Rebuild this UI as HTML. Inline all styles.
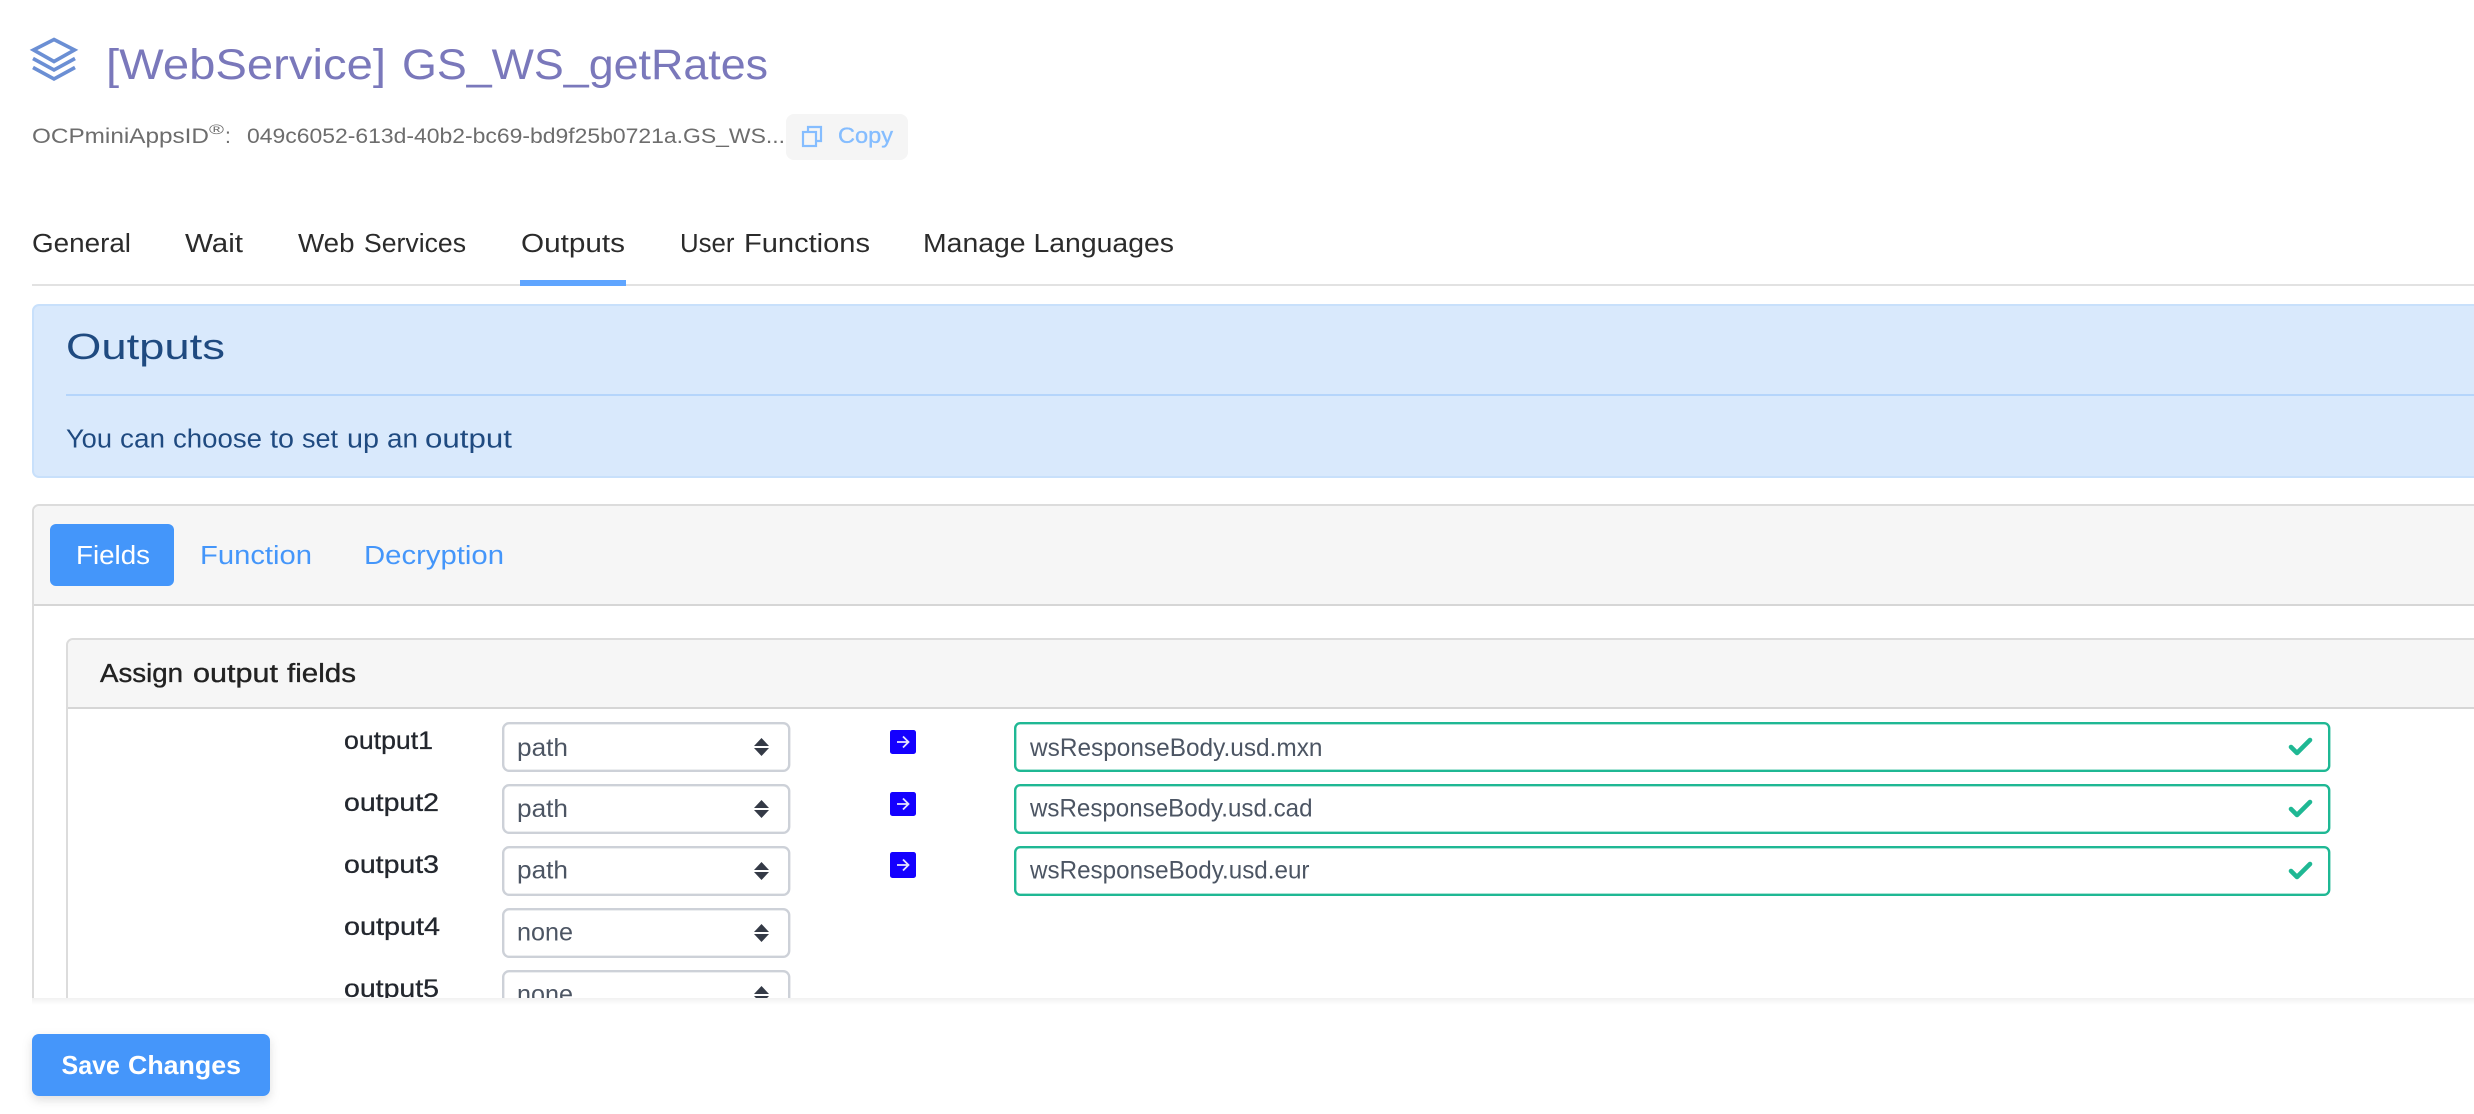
<!DOCTYPE html>
<html lang="en">
<head>
<meta charset="utf-8">
<title>[WebService] GS_WS_getRates</title>
<style>
html,body{margin:0;padding:0;background:#fff;width:2474px;height:1114px;overflow:hidden}
svg{display:block}
text{font-family:"Liberation Sans",Arial,sans-serif}
</style>
</head>
<body>
<svg xmlns="http://www.w3.org/2000/svg" width="2474" height="1114" viewBox="0 0 2474 1114">
<defs>
<linearGradient id="fs" x1="0" y1="0" x2="0" y2="1"><stop offset="0" stop-color="#f1f1f1"/><stop offset="1" stop-color="#ffffff"/></linearGradient>
<filter id="bs" x="-10%" y="-20%" width="120%" height="150%"><feDropShadow dx="0" dy="4" stdDeviation="5" flood-color="#000" flood-opacity=".13"/></filter>
</defs>
<rect width="2474" height="1114" fill="#fff"/>

<!-- header -->
<g fill="none" stroke="#6b8fd4" stroke-width="3.6" stroke-linejoin="miter">
<path d="M54 39.5L74.5 50L54 61.5L33.5 50Z"/>
<path d="M33 58.500L54 70L75 58.500"/>
<path d="M33 67.500L54 79L75 67.500"/>
</g>
<text x="106" y="79" font-size="43" fill="#7a78bb" textLength="280" lengthAdjust="spacingAndGlyphs">[WebService]</text>
<text x="402" y="79" font-size="43" fill="#7a78bb" textLength="366" lengthAdjust="spacingAndGlyphs">GS_WS_getRates</text>

<g fill="#6d6d6d">
<text x="32" y="143" font-size="21" textLength="177" lengthAdjust="spacingAndGlyphs">OCPminiAppsID</text>
<text x="209" y="134" font-size="14" textLength="15" lengthAdjust="spacingAndGlyphs">®</text>
<text x="225" y="143" font-size="21">:</text>
<text x="247" y="143" font-size="21" textLength="538" lengthAdjust="spacingAndGlyphs">049c6052-613d-40b2-bc69-bd9f25b0721a.GS_WS...</text>
</g>
<rect x="786" y="114" width="122" height="46" rx="8" fill="#f5f5f5"/>
<g fill="none" stroke="#85bdff" stroke-width="2.2">
<rect x="803" y="132" width="13" height="14"/>
<path d="M808 131V127H821V141H817"/>
</g>
<text x="838" y="143" font-size="22" fill="#85bdff" stroke="#85bdff" stroke-width=".35" textLength="55" lengthAdjust="spacingAndGlyphs">Copy</text>

<!-- nav tabs -->
<g font-size="25.5" fill="#2b2b2b">
<text x="32" y="252" textLength="99" lengthAdjust="spacingAndGlyphs">General</text>
<text x="185" y="252" textLength="58" lengthAdjust="spacingAndGlyphs">Wait</text>
<text x="298" y="252" textLength="56.500" lengthAdjust="spacingAndGlyphs">Web</text>
<text x="364" y="252" textLength="102" lengthAdjust="spacingAndGlyphs">Services</text>
<text x="521" y="252" textLength="104" lengthAdjust="spacingAndGlyphs">Outputs</text>
<text x="680" y="252" textLength="54.500" lengthAdjust="spacingAndGlyphs">User</text>
<text x="744" y="252" textLength="126" lengthAdjust="spacingAndGlyphs">Functions</text>
<text x="923" y="252" textLength="251" lengthAdjust="spacingAndGlyphs">Manage Languages</text>
</g>
<rect x="32" y="284" width="2442" height="2" fill="#e2e2e2"/>
<rect x="520" y="280" width="106" height="6" fill="#5fa5ff"/>

<!-- alert -->
<rect x="33" y="305" width="2460" height="172" rx="6" fill="#d9e9fc" stroke="#c8e0fb" stroke-width="2"/>
<text x="66" y="359" font-size="36" fill="#1f4a80" textLength="159" lengthAdjust="spacingAndGlyphs">Outputs</text>
<rect x="66" y="394" width="2408" height="2" fill="#b5d5fb"/>
<g font-size="25.5" fill="#1f4a80">
<text x="66" y="447.500" textLength="46" lengthAdjust="spacingAndGlyphs">You</text>
<text x="120" y="447.500" textLength="45" lengthAdjust="spacingAndGlyphs">can</text>
<text x="173" y="447.500" textLength="89" lengthAdjust="spacingAndGlyphs">choose</text>
<text x="270" y="447.500" textLength="24" lengthAdjust="spacingAndGlyphs">to</text>
<text x="302" y="447.500" textLength="36" lengthAdjust="spacingAndGlyphs">set</text>
<text x="347" y="447.500" textLength="32" lengthAdjust="spacingAndGlyphs">up</text>
<text x="387" y="447.500" textLength="31" lengthAdjust="spacingAndGlyphs">an</text>
<text x="425" y="447.500" textLength="87" lengthAdjust="spacingAndGlyphs">output</text>
</g>

<!-- outer card -->
<rect x="33" y="505" width="2460" height="560" rx="6" fill="#fff" stroke="#dcdcdc" stroke-width="2"/>
<path d="M34 605V512a6 6 0 0 1 6-6H2474V605Z" fill="#f6f6f6"/>
<rect x="34" y="604" width="2440" height="2" fill="#d6d6d6"/>
<rect x="50" y="524" width="124" height="62" rx="6" fill="#4496fa"/>
<text x="76" y="564" font-size="25.5" fill="#fff" textLength="74" lengthAdjust="spacingAndGlyphs">Fields</text>
<text x="200" y="564" font-size="25.5" fill="#4496fa" textLength="112" lengthAdjust="spacingAndGlyphs">Function</text>
<text x="364" y="564" font-size="25.5" fill="#4496fa" textLength="140" lengthAdjust="spacingAndGlyphs">Decryption</text>

<!-- inner card -->
<rect x="67" y="639" width="2440" height="440" rx="6" fill="#fff" stroke="#dcdcdc" stroke-width="2"/>
<path d="M68 708V646a6 6 0 0 1 6-6H2474V708Z" fill="#f6f6f6"/>
<rect x="68" y="707" width="2406" height="2" fill="#d6d6d6"/>
<g font-size="25.5" fill="#222" stroke="#222" stroke-width=".35">
<text x="100" y="682" textLength="83" lengthAdjust="spacingAndGlyphs">Assign</text>
<text x="193" y="682" textLength="85" lengthAdjust="spacingAndGlyphs">output</text>
<text x="287" y="682" textLength="69" lengthAdjust="spacingAndGlyphs">fields</text>
</g>

<!-- rows -->
<g font-size="25" fill="#23272e" stroke="#23272e" stroke-width=".3">
<text x="344" y="749" textLength="89" lengthAdjust="spacingAndGlyphs">output1</text>
<text x="344" y="811" textLength="95" lengthAdjust="spacingAndGlyphs">output2</text>
<text x="344" y="873" textLength="95" lengthAdjust="spacingAndGlyphs">output3</text>
<text x="344" y="935" textLength="96" lengthAdjust="spacingAndGlyphs">output4</text>
<text x="344" y="997" textLength="95" lengthAdjust="spacingAndGlyphs">output5</text>
</g>

<g fill="#fff" stroke="#cdd1d8" stroke-width="2.4">
<rect x="503.2" y="723.2" width="286" height="47.6" rx="6"/>
<rect x="503.2" y="785.2" width="286" height="47.6" rx="6"/>
<rect x="503.2" y="847.2" width="286" height="47.6" rx="6"/>
<rect x="503.2" y="909.2" width="286" height="47.6" rx="6"/>
<rect x="503.2" y="971.2" width="286" height="47.6" rx="6"/>
</g>
<g font-size="25" fill="#4c5563">
<text x="517" y="756" textLength="51" lengthAdjust="spacingAndGlyphs">path</text>
<text x="517" y="817" textLength="51" lengthAdjust="spacingAndGlyphs">path</text>
<text x="517" y="878.500" textLength="51" lengthAdjust="spacingAndGlyphs">path</text>
<text x="517" y="940.500" textLength="56" lengthAdjust="spacingAndGlyphs">none</text>
<text x="517" y="1002.500" textLength="56" lengthAdjust="spacingAndGlyphs">none</text>
</g>
<g fill="#343a46">
<path d="M761.5 738L769 746H754Z"/><path d="M754 748H769L761.5 756Z"/>
<path d="M761.5 800L769 808H754Z"/><path d="M754 810H769L761.5 818Z"/>
<path d="M761.5 862L769 870H754Z"/><path d="M754 872H769L761.5 880Z"/>
<path d="M761.5 924L769 932H754Z"/><path d="M754 934H769L761.5 942Z"/>
<path d="M761.5 986L769 994H754Z"/><path d="M754 996H769L761.5 1004Z"/>
</g>

<!-- arrow buttons -->
<g fill="#1400ff">
<rect x="890" y="730" width="26" height="24" rx="2.5"/>
<rect x="890" y="792" width="26" height="24" rx="2.5"/>
<rect x="890" y="852" width="26" height="26" rx="2.5"/>
</g>
<g fill="none" stroke="#e6e4ff" stroke-width="1.8">
<path d="M897 742H908M903 736.5L908.5 742L903 747.5"/>
<path d="M897 804H908M903 798.5L908.5 804L903 809.5"/>
<path d="M897 865H908M903 859.5L908.5 865L903 870.5"/>
</g>

<!-- inputs -->
<g fill="#fff" stroke="#1fb894" stroke-width="2.4">
<rect x="1015.2" y="723.2" width="1314" height="47.6" rx="5"/>
<rect x="1015.2" y="785.2" width="1314" height="47.6" rx="5"/>
<rect x="1015.2" y="847.2" width="1314" height="47.6" rx="5"/>
</g>
<g font-size="25" fill="#4c5563">
<text x="1030" y="756" textLength="292.500" lengthAdjust="spacingAndGlyphs">wsResponseBody.usd.mxn</text>
<text x="1030" y="816.500" textLength="282.500" lengthAdjust="spacingAndGlyphs">wsResponseBody.usd.cad</text>
<text x="1030" y="878.500" textLength="279.500" lengthAdjust="spacingAndGlyphs">wsResponseBody.usd.eur</text>
</g>
<g fill="none" stroke="#1fb894" stroke-width="4.6" stroke-linecap="round" stroke-linejoin="round">
<path d="M2291 747L2297 753L2310 740"/>
<path d="M2291 809L2297 815L2310 802"/>
<path d="M2291 871L2297 877L2310 864"/>
</g>

<!-- footer -->
<rect x="0" y="998" width="2474" height="116" fill="#fff"/>
<rect x="32" y="998" width="2442" height="7" fill="url(#fs)"/>
<rect x="32" y="1034" width="238" height="62" rx="7" fill="#4496fa" filter="url(#bs)"/>
<text x="61.500" y="1074" font-size="26" font-weight="700" fill="#fff" textLength="58.500" lengthAdjust="spacingAndGlyphs">Save</text>
<text x="128" y="1074" font-size="26" font-weight="700" fill="#fff" textLength="113" lengthAdjust="spacingAndGlyphs">Changes</text>
</svg>
</body>
</html>
